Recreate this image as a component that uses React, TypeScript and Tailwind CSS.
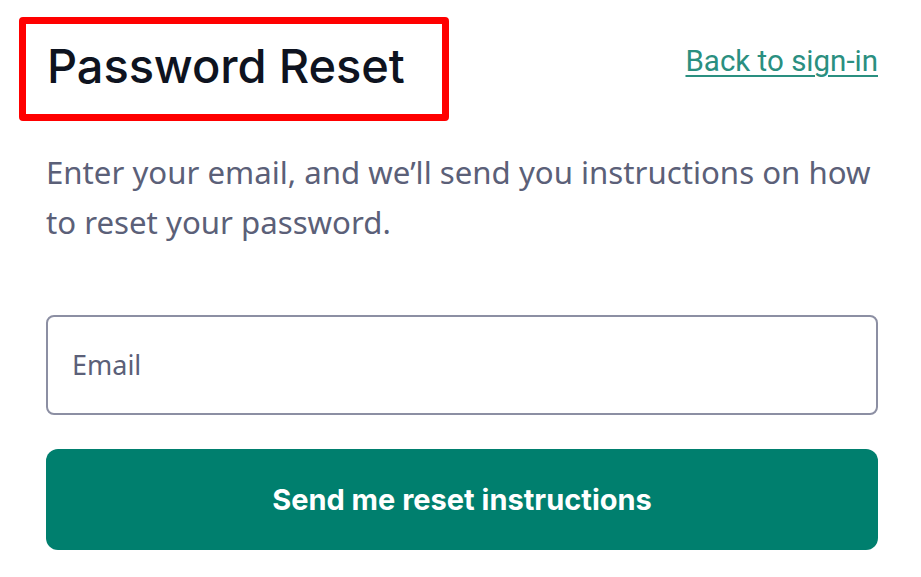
import React from "react";

const App: React.FC = () => {
  return (
    <div className="w-[921px] h-[577px] bg-white overflow-hidden">
      <div className="flex items-center justify-between w-[878px] pl-[19px] pt-[17px]">
        <div className="border-[7px] border-[#ff0000] rounded-[4px] h-[104px] w-[430px] pl-[21px] flex items-center">
          <h1 className="-mt-[8px] font-['Inter',sans-serif] font-medium text-[47px] leading-none text-[#0e1320] tracking-[-0.1px]">
            Password Reset
          </h1>
        </div>
        <a
          href="#"
          className="font-['Roboto',sans-serif] text-[29.5px] leading-none text-[#2a8f80] underline underline-offset-[4px] decoration-[2px] -mt-[14px]"
        >
          Back to sign-in
        </a>
      </div>

      <div className="pl-[46px] w-[878px]">
        <p className="mt-[26px] font-['Noto_Sans',sans-serif] text-[31.2px] leading-[50px] text-[#5b6078]">
          Enter your email, and we’ll send you instructions on how to reset your password.
        </p>

        <div className="mt-[68px] h-[100px] border-2 border-[#8c8fa3] rounded-[8px] flex items-center px-[24px]">
          <input
            type="email"
            placeholder="Email"
            className="w-full outline-none bg-transparent font-['Noto_Sans',sans-serif] text-[27px] text-[#5b6078] placeholder:text-[#5b6078]"
          />
        </div>

        <button className="mt-[34px] w-full h-[101px] bg-[#007f6e] rounded-[12px] font-['Inter',sans-serif] font-bold text-[29px] text-white">
          Send me reset instructions
        </button>
      </div>
    </div>
  );
};

export default App;
